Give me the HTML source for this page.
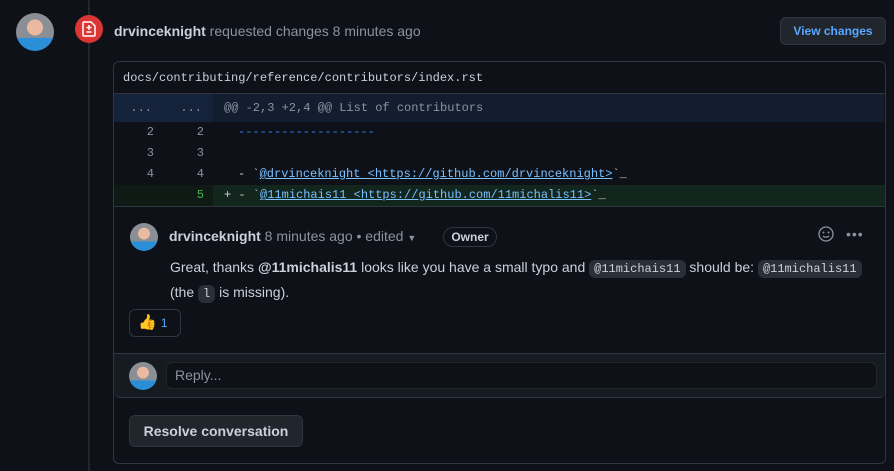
<!DOCTYPE html>
<html><head><meta charset="utf-8"><style>
*{box-sizing:border-box;margin:0;padding:0}
body{width:894px;height:471px;background:#0e1117;font-family:"Liberation Sans",sans-serif;color:#c9d1d9;position:relative;overflow:hidden;font-size:14px}
.abs{position:absolute}
.mono{font-family:"Liberation Mono",monospace;font-size:12px}
.av{border-radius:50%;background:radial-gradient(circle at 50% 38%,#e9b9a0 0 26%,transparent 27%),linear-gradient(#8a8f96 0 65%,#2a8fd6 66%);overflow:hidden}
.row{position:absolute;left:114px;width:770px;height:21px;line-height:21px}
.ln{position:absolute;width:40px;text-align:right;color:#8b949e}
a{color:#79c0ff;text-decoration:underline}
code{font-family:"Liberation Mono",monospace;font-size:12px;background:#2b3038;border-radius:6px;padding:2px 5px}
</style></head><body>
<div class="abs" style="left:88px;top:0;width:2px;height:471px;background:#21262d"></div>
<div class="abs av" style="left:16px;top:13px;width:38px;height:38px"></div>
<div class="abs" style="left:75px;top:15px;width:28px;height:28px;border-radius:50%;background:#da3633"></div>
<svg class="abs" style="left:82px;top:21px" width="14" height="16" viewBox="0 0 14 16"><path d="M2 1h7l4 4v9a1 1 0 0 1-1 1H2a1 1 0 0 1-1-1V2a1 1 0 0 1 1-1z" fill="none" stroke="#fff" stroke-width="1.5"/><path d="M7 4v5M4.5 6.5h5M4.5 11h5" stroke="#fff" stroke-width="1.5"/></svg>
<div class="abs" style="left:114px;top:23px;color:#8b949e"><b style="color:#c9d1d9">drvinceknight</b> requested changes 8 minutes ago</div>
<div class="abs" style="left:780px;top:17px;width:106px;height:28px;border:1px solid #30363d;border-radius:6px;background:#21262d;color:#58a6ff;font-size:12px;font-weight:bold;line-height:26px;text-align:center">View changes</div>

<div class="abs" style="left:113px;top:61px;width:773px;height:403px;border:1px solid #30363d;border-radius:6px"></div>
<div class="abs mono" style="left:123px;top:71px;color:#c9d1d9">docs/contributing/reference/contributors/index.rst</div>
<div class="abs" style="left:114px;top:93px;width:771px;height:1px;background:#30363d"></div>
<div class="row mono" style="top:94px;height:28px;line-height:28px;background:#121d2f;color:#8b949e"><span style="position:absolute;left:0;width:99px;height:28px;background:#14233a"></span><span class="ln" style="left:0;width:38px">...</span><span class="ln" style="left:50px;width:38px">...</span><span style="position:absolute;left:110px">@@ -2,3 +2,4 @@ List of contributors</span></div>
<div class="row mono" style="top:122px"><span class="ln" style="left:0">2</span><span class="ln" style="left:50px">2</span><span style="position:absolute;left:124px;color:#2f81f7">-------------------</span></div>
<div class="row mono" style="top:143px"><span class="ln" style="left:0">3</span><span class="ln" style="left:50px">3</span></div>
<div class="row mono" style="top:164px"><span class="ln" style="left:0">4</span><span class="ln" style="left:50px">4</span><span style="position:absolute;left:124px">- `<a>@drvinceknight &lt;https://github.com/drvinceknight&gt;</a>`_</span></div>
<div class="row mono" style="top:185px;background:#12261e;width:771px"><span style="position:absolute;left:0;width:99px;height:21px;background:#101a15"></span><span class="ln" style="left:50px;color:#3fb950">5</span><span style="position:absolute;left:110px">+ - `<a>@11michais11 &lt;https://github.com/11michalis11&gt;</a>`_</span></div>
<div class="abs" style="left:114px;top:206px;width:771px;height:1px;background:#30363d"></div>

<div class="abs av" style="left:130px;top:223px;width:28px;height:28px"></div>
<div class="abs" style="left:169px;top:228px;color:#8b949e"><b style="color:#c9d1d9">drvinceknight</b> 8 minutes ago • edited <span style="font-size:9px">▼</span></div>
<div class="abs" style="left:443px;top:227px;width:54px;height:20px;border:1px solid #30363d;border-radius:10px;font-size:12px;font-weight:bold;text-align:center;line-height:18px">Owner</div>
<svg class="abs" style="left:818px;top:226px" width="16" height="16" viewBox="0 0 16 16"><circle cx="8" cy="8" r="7" fill="none" stroke="#8b949e" stroke-width="1.3"/><circle cx="5.5" cy="6.5" r="1" fill="#8b949e"/><circle cx="10.5" cy="6.5" r="1" fill="#8b949e"/><path d="M5 10q3 2.5 6 0" fill="none" stroke="#8b949e" stroke-width="1.3"/></svg>
<div class="abs" style="left:846px;top:226px;color:#8b949e;font-size:14px;letter-spacing:1px">•••</div>
<div class="abs" style="left:170px;top:256px;line-height:23px;width:710px">Great, thanks <b>@11michalis11</b> looks like you have a small typo and <code>@11michais11</code> should be: <code>@11michalis11</code><br>(the <code>l</code> is missing).</div>
<div class="abs" style="left:129px;top:309px;width:52px;height:28px;border:1px solid #30363d;border-radius:6px;line-height:26px;padding-left:8px;font-size:15px">👍 <span style="color:#58a6ff;font-size:12px">1</span></div>
<div class="abs" style="left:114px;top:353px;width:771px;height:45px;background:#161b22;border-top:1px solid #30363d;border-bottom:1px solid #30363d;border-radius:0 0 6px 6px"></div>
<div class="abs av" style="left:129px;top:362px;width:28px;height:28px"></div>
<div class="abs" style="left:166px;top:362px;width:711px;height:27px;border:1px solid #21262d;border-radius:6px;background:#0e1117;color:#8b949e;line-height:25px;padding-left:8px">Reply...</div>
<div class="abs" style="left:129px;top:415px;width:174px;height:32px;border:1px solid #30363d;border-radius:6px;background:#21262d;font-weight:bold;text-align:center;line-height:30px">Resolve conversation</div>
</body></html>
